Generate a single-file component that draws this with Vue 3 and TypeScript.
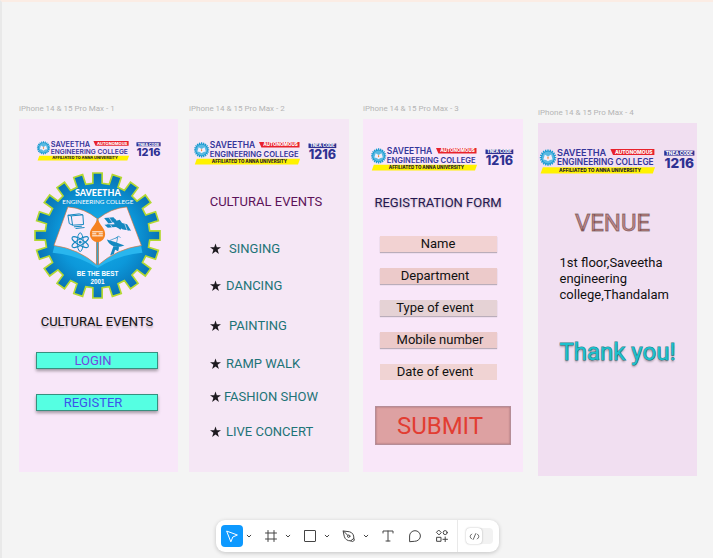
<script setup lang="ts">
interface Board {
  id: number
  name: string
}
interface EventItem {
  name: string
  indent: string
}
interface Field {
  name: string
  tint: string
  lean: string
}

const boards: Board[] = [1, 2, 3, 4].map((id) => ({ id, name: `iPhone 14 & 15 Pro Max - ${id}` }))

const events: EventItem[] = [
  { name: 'SINGING', indent: 'wide' },
  { name: 'DANCING', indent: 'normal' },
  { name: 'PAINTING', indent: 'wide' },
  { name: 'RAMP WALK', indent: 'normal' },
  { name: 'FASHION SHOW', indent: 'tight' },
  { name: 'LIVE CONCERT', indent: 'normal' },
]

const fields: Field[] = [
  { name: 'Name', tint: 'peach', lean: 'center' },
  { name: 'Department', tint: 'rose', lean: 'left' },
  { name: 'Type of event', tint: 'grey', lean: 'left' },
  { name: 'Mobile number', tint: 'rose', lean: 'right' },
  { name: 'Date of event', tint: 'sand', lean: 'left' },
]

// Outline of a cog: straight-sided teeth of equal width around a root circle.
function gear(cx: number, cy: number, outer: number, root: number, half: number, teeth = 20): string {
  const pts: string[] = []
  for (let i = 0; i < teeth; i++) {
    const a = (i * 2 * Math.PI) / teeth
    const corners = [[-half, root], [-half, outer], [half, outer], [half, root]]
    for (const [x, r] of corners) {
      const px = cx + x * Math.cos(a) + r * Math.sin(a)
      const py = cy + x * Math.sin(a) - r * Math.cos(a)
      pts.push(`${px.toFixed(1)},${py.toFixed(1)}`)
    }
  }
  return pts.join(' ')
}

const bigGear = gear(229, 210, 188, 157, 14)
const smallGear = gear(80, 86, 82, 68, 7)
</script>

<template>
  <main class="workspace">
    <section v-for="b in boards" :key="b.id" class="node" :class="`node-${b.id}`">
      <p class="node-name">{{ b.name }}</p>
      <div class="board">
        <svg class="logo" viewBox="0 0 1560 250">
          <polygon :points="smallGear" fill="#1a9bd0" />
          <circle cx="80" cy="86" r="60" fill="#58b9e2" />
          <path d="M80 76 L48 56 L34 104 Q62 104 80 122 Q98 104 126 104 L112 56 Z" fill="#f3eefa" />
          <path d="M80 70 q14 20 0 34 q-14 -14 0 -34" fill="#ef7d22" />
          <text class="logo-name" x="170" y="70">SAVEETHA</text>
          <polygon points="704,0 1144,0 1144,60 730,60" fill="#e8222c" />
          <text class="logo-auto" x="938" y="48">AUTONOMOUS</text>
          <text class="logo-college" x="170" y="161">ENGINEERING COLLEGE</text>
          <polygon points="28,183 1150,183 1128,244 6,244" fill="#fff200" />
          <text class="logo-affil" x="600" y="230">AFFILIATED TO ANNA UNIVERSITY</text>
          <rect x="1242" y="16" width="302" height="50" fill="#2e3192" />
          <text class="logo-code" x="1393" y="57">TNEA CODE</text>
          <text class="logo-number" x="1393" y="188">1216</text>
        </svg>

        <template v-if="b.id === 1">
          <svg class="emblem" viewBox="36 19 386 382">
            <defs>
              <radialGradient id="disc">
                <stop offset="0" stop-color="#18b0ea" />
                <stop offset="0.6" stop-color="#0c98da" />
                <stop offset="1" stop-color="#0872b4" />
              </radialGradient>
            </defs>
            <polygon :points="bigGear" fill="url(#disc)" stroke="#b4d832" stroke-width="5" />
            <path d="M94 262 L100 240 Q170 250 229 298 Q288 250 360 240 L364 262 Q290 268 229 308 Q170 268 94 262Z" fill="#29b6ee" />
            <path d="M229 160 Q190 128 140 124 L98 240 Q172 250 226 298 L226 226 M230 160 Q270 128 317 124 L361 240 Q288 250 232 298 L232 226" fill="#f8eafa" />
            <path d="M226 298 L226 160 L232 160 L232 298Z" fill="#3aa6cc" />
            <path d="M229 160 Q190 128 140 124 L98 240 Q172 250 226 298 V226 M230 160 Q270 128 317 124 L361 240 Q288 250 232 298 V226" fill="none" stroke="#d8743a" stroke-width="2" />
            <path d="M229 158 C235 178 252 188 252 206 A23 24 0 0 1 206 206 C206 188 224 178 229 158Z" fill="#f58220" />
            <path d="M213 199h32M213 205h32M213 211h32" stroke="#fff" stroke-width="3" />
            <circle cx="229" cy="205" r="4" fill="#f58220" />
            <g fill="none" stroke="#1588c0" stroke-width="3">
              <path d="M150 151 L185 148 L187 177 L154 179Z M150 151 L140 149 L144 174 L154 179 M140 149 L174 145 L185 148 M158 184 L182 182 M163 189 L190 186" />
              <ellipse cx="177" cy="230" rx="9" ry="28" />
              <ellipse cx="177" cy="230" rx="9" ry="28" transform="rotate(60 177 230)" />
              <ellipse cx="177" cy="230" rx="9" ry="28" transform="rotate(120 177 230)" />
            </g>
            <circle cx="177" cy="230" r="4" fill="#1588c0" />
            <g fill="#1588c0">
              <path d="M249 157 L277 155 L289 169 L262 174Z M299 172 L318 176 L330 196 L303 191Z M250 178 L282 176 L290 184 L260 187Z" />
              <path d="M278 168 L296 163 L308 180 L298 193 L281 181Z" />
              <path d="M257 222 Q280 228 310 240 Q294 247 279 243 Q263 237 257 222Z" />
              <path d="M277 242 L267 270 L278 266 L282 253 L291 257 L294 245Z" />
            </g>
            <path d="M266 225 L290 215 L286 234 M284 219 Q292 207 298 217 M257 176 L324 194 M258 165 L284 162 M306 181 L323 187" fill="none" stroke="#1588c0" stroke-width="2" />
            <path d="M263 155 L275 173 M311 175 L318 194 M268 178 L274 187" stroke="#f8eafa" stroke-width="2" />
            <text class="emblem-name" x="230" y="90">SAVEETHA</text>
            <text class="emblem-college" x="230" y="116">ENGINEERING COLLEGE</text>
            <text class="emblem-motto" x="229" y="332">BE THE BEST</text>
            <text class="emblem-year" x="229" y="356">2001</text>
          </svg>
          <h2 class="title">CULTURAL EVENTS</h2>
          <button class="entry login" type="button">LOGIN</button>
          <button class="entry register" type="button">REGISTER</button>
        </template>

        <template v-else-if="b.id === 2">
          <h2 class="title">CULTURAL EVENTS</h2>
          <ul class="events">
            <li v-for="e in events" :key="e.name" :class="e.indent">
              <svg class="star" viewBox="0 0 12 12">
                <path d="M6 0 7.4 4.2H12L8.3 6.9 9.7 11.4 6 8.7 2.3 11.4 3.7 6.9 0 4.2h4.6Z" fill="#1d1a1f" />
              </svg>
              <span>{{ e.name }}</span>
            </li>
          </ul>
        </template>

        <form v-else-if="b.id === 3" class="form" @submit.prevent>
          <h2 class="title">REGISTRATION FORM</h2>
          <div class="fields">
            <input
              v-for="f in fields"
              :key="f.name"
              type="text"
              :class="[f.tint, f.lean]"
              :placeholder="f.name"
              :aria-label="f.name"
            />
          </div>
          <button class="submit" type="submit">SUBMIT</button>
        </form>

        <template v-else>
          <h2 class="venue">VENUE</h2>
          <p class="address">1st floor,Saveetha engineering college,Thandalam</p>
          <p class="thanks">Thank you!</p>
        </template>
      </div>
    </section>

    <div class="dock">
      <nav class="toolbar" aria-label="Tools">
        <button class="tool active" type="button" aria-label="Move">
          <svg viewBox="0 0 16 16"><path d="M3 3.2 13.4 7 8.8 9 7 13.5Z" /></svg>
        </button>
        <button class="more" type="button" aria-label="Move tools"><svg viewBox="0 0 6 6"><path d="M1.2 2.2 3 4 4.8 2.2" /></svg></button>
        <button class="tool" type="button" aria-label="Frame">
          <svg viewBox="0 0 16 16"><path d="M5 2.5v11M11 2.5v11M2.5 5h11M2.5 11h11" /></svg>
        </button>
        <button class="more" type="button" aria-label="Frame tools"><svg viewBox="0 0 6 6"><path d="M1.2 2.2 3 4 4.8 2.2" /></svg></button>
        <button class="tool" type="button" aria-label="Rectangle">
          <svg viewBox="0 0 16 16"><rect x="2.5" y="2.5" width="11" height="11" rx="0.5" /></svg>
        </button>
        <button class="more" type="button" aria-label="Shape tools"><svg viewBox="0 0 6 6"><path d="M1.2 2.2 3 4 4.8 2.2" /></svg></button>
        <button class="tool" type="button" aria-label="Pen">
          <svg viewBox="0 0 16 16"><path d="M2.5 3 8.6 3.8C11.6 4.6 13 7.2 12.8 10.2L13.4 12.3 11.6 13.5 9.8 12.8C6.5 13 4 11.4 3.3 8.6ZM2.5 3 6.8 7.4M12.8 10.4 9.8 12.8" /><circle cx="7.7" cy="8.2" r="1.2" /></svg>
        </button>
        <button class="more" type="button" aria-label="Drawing tools"><svg viewBox="0 0 6 6"><path d="M1.2 2.2 3 4 4.8 2.2" /></svg></button>
        <button class="tool" type="button" aria-label="Text">
          <svg viewBox="0 0 16 16"><path d="M3 5V3h10v2M8 3v10M6 13h4" /></svg>
        </button>
        <button class="tool" type="button" aria-label="Comment">
          <svg viewBox="0 0 16 16"><path d="M2.6 13.3V8A5.4 5.3 0 1 1 8 13.3Z" /></svg>
        </button>
        <button class="tool" type="button" aria-label="Actions">
          <svg viewBox="0 0 16 16"><path d="M5 2.3 7.3 4.6 5 6.9 2.7 4.6ZM3 9.3h4v4H3ZM11.2 9v4.6M8.9 11.3h4.6" /><circle cx="11.2" cy="4.6" r="2" /></svg>
        </button>
        <span class="divider"></span>
        <button class="dev" type="button" aria-label="Dev Mode">
          <span class="knob">
            <svg viewBox="0 0 16 16"><path d="M4.5 5Q.5 8 4.5 11M11.5 5Q15.5 8 11.5 11M9.5 4.5 6.5 11.5" /></svg>
          </span>
        </button>
      </nav>
    </div>
  </main>
</template>

<style>
body {
  margin: 0;
  background: #f4f4f4;
}
</style>

<style scoped>
* {
  box-sizing: border-box;
}
.workspace {
  position: relative;
  display: flex;
  flex-direction: column;
  justify-content: flex-end;
  min-height: 100vh;
  overflow: hidden;
  border-top: 2px solid #fbece4;
  border-left: 2px solid #e9e9e9;
  background: #f4f4f4;
  font-family: Roboto, "Liberation Sans", sans-serif;
}
h2,
p,
ul {
  margin: 0;
  padding: 0;
  font-weight: 400;
}
button,
input {
  margin: 0;
  padding: 0;
  border: 0;
  font-family: inherit;
}

/* Artboards, each at its own spot on the canvas */
.node {
  position: absolute;
  top: 102px;
  width: 160px;
}
.node-1 { left: 17px; width: 159px; }
.node-2 { left: 187px; }
.node-3 { left: 361px; }
.node-4 { top: 106px; left: 536px; width: 159px; }
.node-name {
  margin-bottom: 5px;
  color: #b4b4b4;
  font-size: 8px;
  line-height: 10px;
  white-space: nowrap;
}
.board {
  display: flex;
  flex-direction: column;
  align-items: center;
  height: 353px;
}
.node-1 .board { padding: 22px 3px 0 0; background: #f8e7f9; }
.node-2 .board { padding: 23px 6px 0 0; background: #f5e7f5; }
.node-3 .board { padding: 29px 0 0; background: #f9e7f9; }
.node-4 .board { padding: 26px 0 0; background: #f1dff1; }

.logo {
  flex: none;
  width: 144px;
  height: 23px;
  overflow: visible;
  font-family: Inter, sans-serif;
}
.node-1 .logo { align-self: flex-start; width: 127px; height: 20px; margin-left: 17px; }
.node-4 .logo { width: 156px; height: 25px; }
.logo-name { font-size: 92px; font-weight: 600; fill: #34359a; }
.logo-college { font-size: 83px; font-weight: 600; fill: #34359a; }
.logo-auto { font-size: 50px; font-weight: 800; fill: #fff; text-anchor: middle; }
.logo-affil { font-size: 48px; font-weight: 800; fill: #26232e; text-anchor: middle; }
.logo-code { font-size: 46px; font-weight: 800; fill: #fff; text-anchor: middle; }
.logo-number { font-size: 136px; font-weight: 800; fill: #2e3192; text-anchor: middle; }

.title {
  font-size: 13px;
  line-height: 16px;
  white-space: nowrap;
}

/* Welcome */
.emblem {
  flex: none;
  width: 129px;
  height: 127px;
  margin-top: 11px;
  font-family: Lato, sans-serif;
  text-anchor: middle;
}
.emblem text { fill: #fff; }
.emblem-name { font-size: 27px; font-weight: 900; }
.emblem-college { font-size: 19px; }
.emblem-motto,
.emblem-year { font-family: "Liberation Sans", sans-serif; font-size: 19px; font-weight: 700; }
.node-1 .title {
  margin-top: 15px;
  color: #111;
  text-shadow: 0 2px 2px rgba(0, 0, 0, 0.25);
}
.entry {
  width: 122px;
  height: 17px;
  padding-right: 8px;
  border: 1px solid #37907f;
  background: #55ffe2;
  box-shadow: 0 2px 3px rgba(0, 0, 0, 0.35);
  font-size: 13px;
  line-height: 15px;
}
.login { margin-top: 22px; color: #7348de; }
.register { margin-top: 25px; color: #3c55ea; }

/* Event list */
.node-2 .title { margin-top: 29px; color: #5c1259; }
.events {
  display: grid;
  grid-template-rows: 37px 40px 38px 33px 35px 16px;
  align-self: stretch;
  margin-top: 31px;
  padding-left: 21px;
  list-style: none;
}
.events li {
  display: flex;
  align-items: center;
  height: 16px;
  color: #1d7377;
  font-size: 13px;
  line-height: 16px;
}
.star { width: 11px; height: 12px; }
.wide { gap: 8px; }
.normal { gap: 5px; }
.tight { gap: 3px; }

/* Registration */
.form {
  display: flex;
  flex-direction: column;
  align-items: center;
  align-self: stretch;
  padding-right: 10px;
}
.form .title {
  margin-top: 24px;
  color: #251750;
  text-shadow: 0 1px 2px rgba(0, 0, 0, 0.25);
}
.fields {
  display: grid;
  gap: 16px;
  width: 117px;
  margin-top: 25px;
}
.fields input {
  width: 100%;
  height: 16px;
  box-shadow: 0 1px 1px rgba(0, 0, 0, 0.25);
  color: #111;
  font-size: 13px;
  line-height: 16px;
  text-align: center;
}
.fields input::placeholder { color: #111; opacity: 1; }
.fields .peach { background: #f2d2d2; }
.fields .rose { background: #eccaca; }
.fields .grey { background: #e5d2d5; }
.fields .sand { background: #f0d3d3; box-shadow: none; }
.fields .left { padding-right: 6px; }
.fields .right { padding-left: 4px; }
.submit {
  align-self: flex-start;
  width: 136px;
  height: 39px;
  margin-top: 26px;
  margin-left: 12px;
  padding-right: 6px;
  border: 1px solid #b58d97;
  background: #dda1a2;
  box-shadow: inset 0 0 2px rgba(80, 40, 60, 0.5);
  color: #e23d32;
  font-size: 24px;
  line-height: 36px;
}

/* Venue */
.venue {
  margin-top: 35px;
  padding-right: 10px;
  color: #c98f8f;
  font-size: 24px;
  line-height: 28px;
  -webkit-text-stroke: 1px rgba(60, 30, 35, 0.5);
}
.address {
  width: 116px;
  margin-top: 18px;
  color: #111;
  font-size: 13px;
  line-height: 16px;
}
.thanks {
  margin-top: 35px;
  color: #1cc0cc;
  font-size: 24px;
  line-height: 28px;
  white-space: nowrap;
  -webkit-text-stroke: 1px #2b7f88;
  paint-order: stroke fill;
  text-shadow: 0 2px 2px rgba(0, 0, 0, 0.3);
}

/* Toolbar */
.dock {
  display: flex;
  justify-content: center;
  padding-bottom: 6px;
}
.toolbar {
  position: relative;
  display: flex;
  align-items: center;
  height: 32px;
  padding: 0 6px 0 5px;
  border-radius: 9px;
  background: #fff;
  box-shadow: 0 1px 4px rgba(0, 0, 0, 0.2);
}
.toolbar button { background: none; }
.toolbar svg {
  display: block;
  fill: none;
  stroke: #444;
  stroke-linecap: round;
  stroke-linejoin: round;
}
.tool {
  display: grid;
  place-items: center;
  width: 22px;
  height: 22px;
  border-radius: 4px;
}
.tool + .tool { margin-left: 5px; }
.tool svg { width: 16px; height: 16px; }
.toolbar .active { background: #0d99ff; }
.toolbar .active svg { stroke: #fff; }
.more {
  display: grid;
  place-items: center;
  width: 12px;
  height: 22px;
  margin-right: 5px;
}
.more svg { width: 6px; height: 6px; }
.divider {
  width: 1px;
  height: 32px;
  margin: 0 8px 0 4px;
  background: #e9e9e9;
}
.toolbar .dev {
  width: 27px;
  height: 16px;
  border-radius: 4px;
  background: #f2f2f2;
}
.knob {
  display: grid;
  place-items: center;
  width: 16px;
  height: 16px;
  border-radius: 4px;
  background: #fff;
  box-shadow: 0 0 2px rgba(0, 0, 0, 0.3);
}
.knob svg { width: 13px; height: 13px; }
</style>
